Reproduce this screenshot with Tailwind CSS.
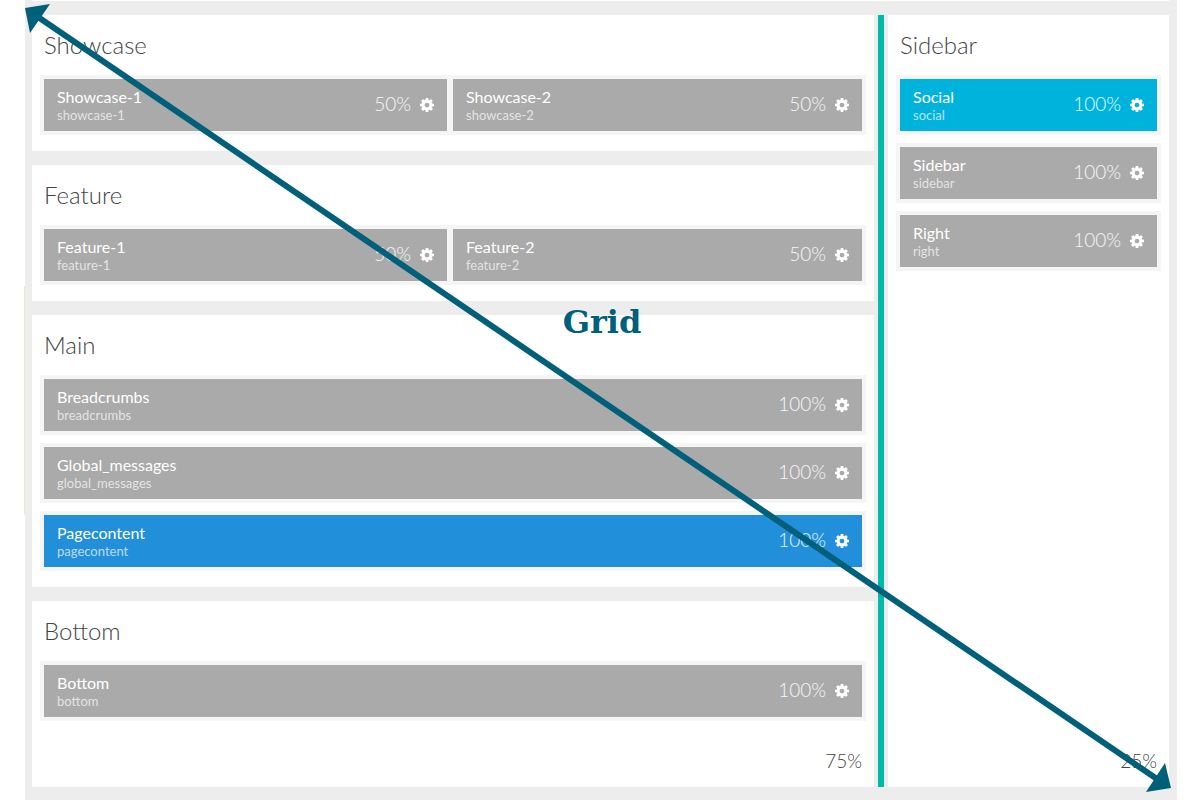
<!DOCTYPE html>
<html lang="en">
<head>
<meta charset="utf-8">
<meta name="viewport" content="width=device-width, initial-scale=1">
<title>Grid layout</title>
<script src="https://cdn.jsdelivr.net/npm/@tailwindcss/browser@4"></script>
</head>
<body class="bg-white font-['Lato',sans-serif] text-[#444444]">
<svg class="hidden" aria-hidden="true">
  <symbol id="cog" viewBox="0 -128 1536 1536"><path fill="currentColor" fill-rule="evenodd" d="M1024 640q0 106-75 181t-181 75-181-75-75-181 75-181 181-75 181 75 75 181zm512-109v222q0 12-8 23t-20 13l-185 28q-19 54-39 91 35 50 107 138 10 12 10 25t-9 23q-27 37-99 108t-94 71q-12 0-26-9l-138-108q-44 23-91 38-16 136-29 186-7 28-36 28h-222q-14 0-24.5-8.5t-11.5-21.5l-28-184q-49-16-90-37l-141 107q-10 9-25 9-14 0-25-11-126-114-165-168-7-10-7-23 0-12 8-23 15-21 51-66.5t54-70.5q-27-50-41-99l-183-27q-13-2-21-12.5t-8-23.5v-222q0-12 8-23t19-13l186-28q14-46 39-92-40-57-107-138-10-12-10-24 0-10 9-23 26-36 98.5-107.5t94.5-71.5q13 0 26 10l138 107q44-23 91-38 16-136 29-186 7-28 36-28h222q14 0 24.5 8.5t11.5 21.5l28 184q49 16 90 37l142-107q9-9 24-9 13 0 25 10 129 119 165 170 7 8 7 22 0 12-8 23-15 21-51 66.5t-54 70.5q26 50 41 98l183 28q13 2 21 12.5t8 23.5z"/></symbol>
</svg>
<div class="relative min-h-screen pl-[25px] pr-[23px]">
  <div class="absolute left-6 top-[286px] h-[229px] w-px bg-[#ede8d0]"></div>
  <main class="flex min-h-screen flex-col bg-[#ededed] pl-[7px] pr-2 pb-[13px]">
    <div class="mb-[14px] h-px bg-white"></div>
    <div class="grid flex-1 grid-cols-[842fr_6px_281fr] gap-x-1">
      <div class="flex flex-col gap-[14px]">
        <section class="bg-white px-2 pb-4">
          <h2 class="flex h-15 items-center px-1 text-2xl font-light">Showcase</h2>
          <div class="grid grid-cols-[403fr_409fr] gap-[6px] bg-[#f5f5f5] p-1">
            <div class="flex h-13 items-center bg-[#aaaaaa] px-[13px] text-white">
              <div class="flex-1 pt-0.5"><h3 class="text-base leading-[18px]">Showcase-1</h3><p class="text-[13px] leading-[18px] text-white/70">showcase-1</p></div>
              <span class="mr-[9px] pb-0.5 text-[19px] font-light text-white/90">50%</span>
              <button type="button" aria-label="Showcase-1 settings"><svg class="size-[14px]"><use href="#cog"/></svg></button>
            </div>
            <div class="flex h-13 items-center bg-[#aaaaaa] px-[13px] text-white">
              <div class="flex-1 pt-0.5"><h3 class="text-base leading-[18px]">Showcase-2</h3><p class="text-[13px] leading-[18px] text-white/70">showcase-2</p></div>
              <span class="mr-[9px] pb-0.5 text-[19px] font-light text-white/90">50%</span>
              <button type="button" aria-label="Showcase-2 settings"><svg class="size-[14px]"><use href="#cog"/></svg></button>
            </div>
          </div>
        </section>
        <section class="bg-white px-2 pb-4">
          <h2 class="flex h-15 items-center px-1 text-2xl font-light">Feature</h2>
          <div class="grid grid-cols-[403fr_409fr] gap-[6px] bg-[#f5f5f5] p-1">
            <div class="flex h-13 items-center bg-[#aaaaaa] px-[13px] text-white">
              <div class="flex-1 pt-0.5"><h3 class="text-base leading-[18px]">Feature-1</h3><p class="text-[13px] leading-[18px] text-white/70">feature-1</p></div>
              <span class="mr-[9px] pb-0.5 text-[19px] font-light text-white/90">50%</span>
              <button type="button" aria-label="Feature-1 settings"><svg class="size-[14px]"><use href="#cog"/></svg></button>
            </div>
            <div class="flex h-13 items-center bg-[#aaaaaa] px-[13px] text-white">
              <div class="flex-1 pt-0.5"><h3 class="text-base leading-[18px]">Feature-2</h3><p class="text-[13px] leading-[18px] text-white/70">feature-2</p></div>
              <span class="mr-[9px] pb-0.5 text-[19px] font-light text-white/90">50%</span>
              <button type="button" aria-label="Feature-2 settings"><svg class="size-[14px]"><use href="#cog"/></svg></button>
            </div>
          </div>
        </section>
        <section class="bg-white px-2 pb-4">
          <h2 class="flex h-15 items-center px-1 text-2xl font-light">Main</h2>
          <div class="flex flex-col gap-2">
            <div class="bg-[#f5f5f5] p-1"><div class="flex h-13 items-center bg-[#aaaaaa] px-[13px] text-white">
              <div class="flex-1 pt-0.5"><h3 class="text-base leading-[18px]">Breadcrumbs</h3><p class="text-[13px] leading-[18px] text-white/70">breadcrumbs</p></div>
              <span class="mr-[9px] pb-0.5 text-[19px] font-light text-white/90">100%</span>
              <button type="button" aria-label="Breadcrumbs settings"><svg class="size-[14px]"><use href="#cog"/></svg></button>
            </div></div>
            <div class="bg-[#f5f5f5] p-1"><div class="flex h-13 items-center bg-[#aaaaaa] px-[13px] text-white">
              <div class="flex-1 pt-0.5"><h3 class="text-base leading-[18px]">Global_messages</h3><p class="text-[13px] leading-[18px] text-white/70">global_messages</p></div>
              <span class="mr-[9px] pb-0.5 text-[19px] font-light text-white/90">100%</span>
              <button type="button" aria-label="Global_messages settings"><svg class="size-[14px]"><use href="#cog"/></svg></button>
            </div></div>
            <div class="bg-[#f5f5f5] p-1"><div class="flex h-13 items-center bg-[#228fdb] px-[13px] text-white">
              <div class="flex-1 pt-0.5"><h3 class="text-base leading-[18px]">Pagecontent</h3><p class="text-[13px] leading-[18px] text-white/70">pagecontent</p></div>
              <span class="mr-[9px] pb-0.5 text-[19px] font-light text-white/90">100%</span>
              <button type="button" aria-label="Pagecontent settings"><svg class="size-[14px]"><use href="#cog"/></svg></button>
            </div></div>
          </div>
        </section>
        <section class="flex flex-1 flex-col bg-white px-2 pb-3">
          <h2 class="flex h-15 items-center px-1 text-2xl font-light">Bottom</h2>
          <div class="bg-[#f5f5f5] p-1"><div class="flex h-13 items-center bg-[#aaaaaa] px-[13px] text-white">
            <div class="flex-1 pt-0.5"><h3 class="text-base leading-[18px]">Bottom</h3><p class="text-[13px] leading-[18px] text-white/70">bottom</p></div>
            <span class="mr-[9px] pb-0.5 text-[19px] font-light text-white/90">100%</span>
            <button type="button" aria-label="Bottom settings"><svg class="size-[14px]"><use href="#cog"/></svg></button>
          </div></div>
          <p class="mt-auto pr-1 text-right text-[19px] font-light">75%</p>
        </section>
      </div>
      <div class="bg-[#00bbaa]"></div>
      <section class="flex flex-col bg-white px-2 pb-3">
        <h2 class="flex h-15 items-center px-1 text-2xl font-light">Sidebar</h2>
        <div class="flex flex-col gap-2">
          <div class="bg-[#f5f5f5] p-1"><div class="flex h-13 items-center bg-[#00b3dd] px-[13px] text-white">
            <div class="flex-1 pt-0.5"><h3 class="text-base leading-[18px]">Social</h3><p class="text-[13px] leading-[18px] text-white/70">social</p></div>
            <span class="mr-[9px] pb-0.5 text-[19px] font-light text-white/90">100%</span>
            <button type="button" aria-label="Social settings"><svg class="size-[14px]"><use href="#cog"/></svg></button>
          </div></div>
          <div class="bg-[#f5f5f5] p-1"><div class="flex h-13 items-center bg-[#aaaaaa] px-[13px] text-white">
            <div class="flex-1 pt-0.5"><h3 class="text-base leading-[18px]">Sidebar</h3><p class="text-[13px] leading-[18px] text-white/70">sidebar</p></div>
            <span class="mr-[9px] pb-0.5 text-[19px] font-light text-white/90">100%</span>
            <button type="button" aria-label="Sidebar settings"><svg class="size-[14px]"><use href="#cog"/></svg></button>
          </div></div>
          <div class="bg-[#f5f5f5] p-1"><div class="flex h-13 items-center bg-[#aaaaaa] px-[13px] text-white">
            <div class="flex-1 pt-0.5"><h3 class="text-base leading-[18px]">Right</h3><p class="text-[13px] leading-[18px] text-white/70">right</p></div>
            <span class="mr-[9px] pb-0.5 text-[19px] font-light text-white/90">100%</span>
            <button type="button" aria-label="Right settings"><svg class="size-[14px]"><use href="#cog"/></svg></button>
          </div></div>
        </div>
        <p class="mt-auto pr-1 text-right text-[19px] font-light">25%</p>
      </section>
    </div>
  </main>
  <!-- Diagonal arrow spanning the whole grid, with its label -->
  <svg class="pointer-events-none absolute inset-0 size-full text-[#00607a]" viewBox="0 0 1200 800" preserveAspectRatio="none" aria-hidden="true">
    <path d="M38 17L1157 779" stroke="currentColor" stroke-width="6"/>
    <path fill="currentColor" d="M25 8L50 4L30 33ZM1171 788L1146 792L1165 763Z"/>
  </svg>
  <div class="pointer-events-none absolute inset-x-0 top-[302px] pl-1 text-center font-['DejaVu_Serif',serif] text-[32px] leading-10 font-bold text-[#00607a]">Grid</div>
</div>
</body>
</html>
